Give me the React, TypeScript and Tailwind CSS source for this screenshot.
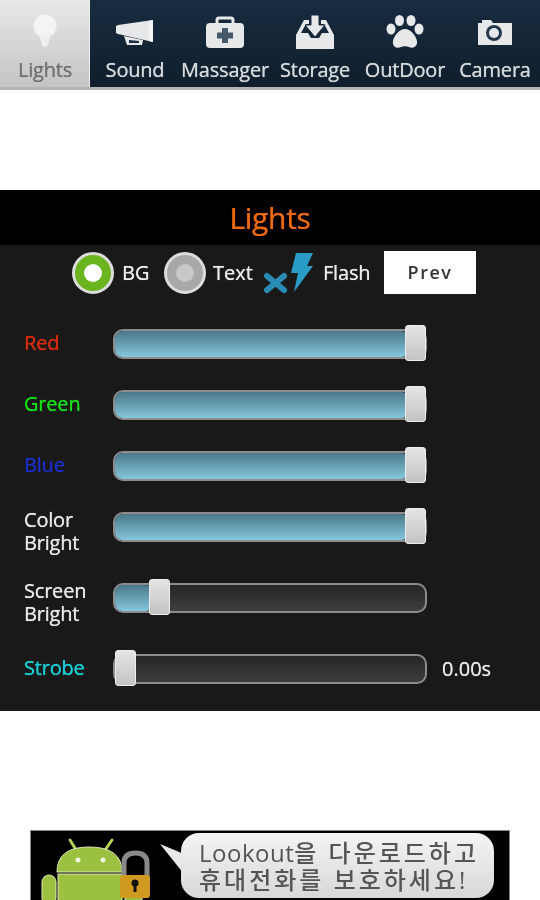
import type { ReactNode } from "react";

const LightIcon = () => (
  <svg width="26" height="36" viewBox="0 0 26 36">
    <circle cx="13" cy="12" r="11.500" fill="#f4f4f4" />
    <path d="M7 19 L19 19 L16 31 Q13 35 10 31 Z" fill="#f0f0f0" />
  </svg>
);

const SoundIcon = () => (
  <svg width="40" height="26" viewBox="0 0 40 26">
    <path d="M1 7 L3 6 L38 1 L38 23 L3 15 L1 14 Z" fill="#e6e8ea" />
    <path d="M34 2 L38 1 L38 23 L34 22 Z" fill="#f4f5f6" />
    <path d="M9 17 L28 21 L27 26 L12 26 Z" fill="#e6e8ea" />
    <path d="M14 21 L24 22 L24 24 L14 24 Z" fill="#1c3146" />
  </svg>
);

const KitIcon = () => (
  <svg width="40" height="32" viewBox="0 0 40 32">
    <path d="M12 8 V4 Q12 2 14 2 H26 Q28 2 28 4 V8" fill="none" stroke="#e6e8ea" strokeWidth="3" />
    <rect x="1" y="7" width="38" height="25" rx="4" fill="#e6e8ea" />
    <path d="M17 12 H23 V16.500 H28 V22.500 H23 V27 H17 V22.500 H12 V16.500 H17 Z" fill="#45596b" />
  </svg>
);

const StorageIcon = () => (
  <svg width="40" height="36" viewBox="0 0 40 36">
    <path d="M1 21 L9 6 H14 V10 H11 L6 19 H13 L16 24 H24 L27 19 H34 L29 10 H26 V6 H31 L39 21 V35 H1 Z" fill="#e6e8ea" />
    <path d="M16 1 H24 V11 H30 L20 23 L10 11 H16 Z" fill="#e6e8ea" stroke="#16293c" strokeWidth="1" />
  </svg>
);

const PawIcon = () => (
  <svg width="38" height="36" viewBox="0 0 38 36">
    <ellipse cx="13.500" cy="6.500" rx="4.500" ry="5.500" fill="#e6e8ea" />
    <ellipse cx="25" cy="6.500" rx="4.500" ry="5.500" fill="#e6e8ea" />
    <ellipse cx="5" cy="15" rx="4.500" ry="5.500" fill="#e6e8ea" />
    <ellipse cx="33" cy="15" rx="4.500" ry="5.500" fill="#e6e8ea" />
    <path d="M19 15 C25 15 30 22 31 27 C32 33 26 35 23 33 C21 32 17 32 15 33 C11 35 6 33 7 27 C8 22 13 15 19 15 Z" fill="#e6e8ea" />
  </svg>
);

const CameraIcon = () => (
  <svg width="36" height="28" viewBox="0 0 36 28">
    <path d="M1 5 H5 V2 H14 L16 5 H35 V27 H1 Z" fill="#e6e8ea" />
    <circle cx="17" cy="15" r="8" fill="#25394c" />
    <circle cx="17" cy="15" r="5" fill="#e6e8ea" />
  </svg>
);

const FlashIcon = () => (
  <svg width="53" height="44" viewBox="0 0 53 44">
    <path d="M4 25 L21 39 M21 25 L4 39" stroke="#2a8cb4" strokeWidth="6" strokeLinecap="round" />
    <path d="M33 2 H50 L44 15 H50 L31 41 L35 22 H28 Z" fill="#2a9ac6" />
  </svg>
);

const tabs: { label: string; icon: ReactNode }[] = [
  { label: "Sound", icon: <SoundIcon /> },
  { label: "Massager", icon: <KitIcon /> },
  { label: "Storage", icon: <StorageIcon /> },
  { label: "OutDoor", icon: <PawIcon /> },
  { label: "Camera", icon: <CameraIcon /> },
];

const Tab = ({ label, icon }: { label: string; icon: ReactNode }) => (
  <div className="w-[90px] h-full flex flex-col items-center">
    <div className="h-[58px] flex items-center pt-[6px]">{icon}</div>
    <span className="text-[20px] leading-[24px] font-medium tracking-[-0.2px] text-[#d6dadd] whitespace-nowrap [text-shadow:0_0_0.7px_currentColor]">
      {label}
    </span>
  </div>
);

const Slider = ({ value }: { value: number }) => (
  <div className="relative w-[314px] h-[30px] rounded-[10px] border-2 border-[#8c8c8c] bg-gradient-to-b from-[#262626] to-[#3e3e3e]">
    <div
      className="h-full rounded-[8px] bg-gradient-to-b from-[#4a7889] to-[#86c8de]"
      style={{ width: value + "px" }}
    />
    <div
      className="absolute top-[-6px] w-[21px] h-[36px] rounded-[3px] bg-gradient-to-b from-[#e4e4e4] to-[#c2c4c4] border border-[#eeeeee]"
      style={{ left: value - 4 + "px" }}
    />
  </div>
);

const rows = [
  { label: ["Red"], color: "text-[#dc2a10] mb-[2px]", value: 294, h: "h-[61px]" },
  { label: ["Green"], color: "text-[#16e016] mb-[2px]", value: 294, h: "h-[61px]" },
  { label: ["Blue"], color: "text-[#1a2fc8] mb-[2px]", value: 294, h: "h-[61px]" },
  { label: ["Color", "Bright"], color: "text-[#e8e8e8] mt-[9px]", value: 294, h: "h-[61px]" },
  { label: ["Screen", "Bright"], color: "text-[#e8e8e8] mt-[9px]", value: 38, h: "h-[81px]" },
  { label: ["Strobe"], color: "text-[#18d0d8] mb-[2px]", value: 4, h: "h-[61px]", extra: "0.00s" },
];

const Radio = ({ outer, inner }: { outer: string; inner: string }) => (
  <div className={`w-[42px] h-[42px] rounded-full border-[3px] border-[#dcdcdc] flex items-center justify-center ${outer}`}>
    <div className={`w-[18px] h-[18px] rounded-full ${inner}`} />
  </div>
);

const AdBanner = () => (
  <div className="w-[480px] h-[70px] ml-[30px] bg-black border-t border-x border-[#888] flex overflow-hidden relative">
    <svg width="112" height="70" viewBox="0 0 112 70" className="shrink-0 ml-[8px]">
      <path d="M39 22 L31 9 M64 22 L73 9" stroke="#b4d25a" strokeWidth="3" strokeLinecap="round" />
      <path d="M18 41 Q18 16 50 16 Q83 16 83 41 Z" fill="#9cc040" stroke="#dfeab8" strokeWidth="1" />
      <circle cx="39" cy="29" r="2.500" fill="#f2f5e0" />
      <circle cx="64" cy="29" r="2.500" fill="#f2f5e0" />
      <rect x="19" y="43" width="64" height="30" fill="#9cc040" stroke="#dfeab8" strokeWidth="1" />
      <rect x="3" y="44" width="14" height="30" rx="7" fill="#9cc040" stroke="#dfeab8" strokeWidth="1" />
      <rect x="86" y="62" width="17" height="12" fill="#9cc040" stroke="#dfeab8" strokeWidth="1" />
      <path d="M85 46 V32 Q85 22 96.500 22 Q108 22 108 32 V46" fill="none" stroke="#8a8a8a" strokeWidth="5" />
      <rect x="81" y="44" width="30" height="23" rx="3" fill="#d09a20" />
      <circle cx="96" cy="52" r="3.500" fill="#111" />
      <rect x="94.500" y="53" width="3" height="8" fill="#111" />
    </svg>
    <svg width="24" height="40" viewBox="0 0 24 40" className="shrink-0 mt-[13px] ml-[9px]">
      <path d="M0 0 L24 10 L24 30 Z" fill="#e8e8e8" />
    </svg>
    <div className="w-[313px] h-[65px] mt-[2px] -ml-[3px] rounded-[18px] bg-gradient-to-b from-[#f4f4f4] to-[#d8d8d8] flex items-center pl-[18px] text-[#555] text-[24px] leading-[27px] font-medium tracking-[3px] whitespace-nowrap">
      <span>
        <span className="tracking-[0.5px]">Lookout</span>을 다운로드하고
        <br />
        휴대전화를 보호하세요!
      </span>
    </div>
  </div>
);

export default function App() {
  return (
    <div className="w-[540px] h-[900px] overflow-hidden bg-white blur-[0.6px] font-['Open_Sans','Noto_Sans_CJK_KR',sans-serif]">
      {/* top tabs */}
      <div className="h-[90px] flex border-b-[3px] border-[#b4b4b4]">
        <div className="w-[91px] h-full flex flex-col items-center bg-gradient-to-b from-[#e8e8e8] to-[#c4c4c4]">
          <div className="h-[58px] flex items-center pt-[6px]">
            <LightIcon />
          </div>
          <span className="text-[20px] leading-[24px] font-medium tracking-[-0.2px] text-[#707070] [text-shadow:0_0_0.7px_currentColor]">
            Lights
          </span>
        </div>
        <div className="flex-1 flex -ml-[1px] border-l border-[#eee] bg-gradient-to-b from-[#182c40] to-[#101e2c]">
          {tabs.map((t) => (
            <Tab key={t.label} label={t.label} icon={t.icon} />
          ))}
        </div>
      </div>

      <div className="h-[100px]" />

      {/* panel */}
      <div className="h-[521px] bg-[#191919]">
        <div className="h-[55px] bg-black flex items-center justify-center text-[30px] font-medium tracking-[-0.3px] text-[#ee6a10] [text-shadow:0_0_0.7px_currentColor]">
          Lights
        </div>

        <div className="h-[56px] flex items-center pl-[72px] text-[20px] font-medium text-[#ececec] [text-shadow:0_0_0.7px_currentColor]">
          <Radio outer="bg-[#6ab41e]" inner="bg-white" />
          <span className="ml-[8px] w-[42px]">BG</span>
          <Radio outer="bg-[#a8a8a8]" inner="bg-[#c8c8c8]" />
          <span className="ml-[7px] w-[50px]">Text</span>
          <FlashIcon />
          <span className="ml-[7px] w-[61px] tracking-[-0.2px]">Flash</span>
          <div className="w-[92px] h-[43px] -mt-[2px] bg-white flex items-center justify-center text-[18px] font-semibold tracking-[1.500px] text-[#333] [text-shadow:none]">
            Prev
          </div>
        </div>

        <div className="pt-[12px]">
          {rows.map((r) => (
            <div key={r.label[0]} className={`flex items-center pl-[24px] ${r.h}`}>
              <div className={`w-[89px] text-[20px] leading-[23px] font-medium tracking-[-0.2px] [text-shadow:0_0_0.7px_currentColor] ${r.color}`}>
                {r.label.length > 1 ? (
                  <>
                    {r.label[0]}
                    <br />
                    {r.label[1]}
                  </>
                ) : (
                  r.label[0]
                )}
              </div>
              <Slider value={r.value} />
              {r.extra && <span className="ml-[15px] text-[20px] font-medium text-[#e8e8e8] [text-shadow:0_0_0.7px_currentColor]">{r.extra}</span>}
            </div>
          ))}
        </div>
      </div>

      <div className="h-[119px]" />
      <AdBanner />
    </div>
  );
}
